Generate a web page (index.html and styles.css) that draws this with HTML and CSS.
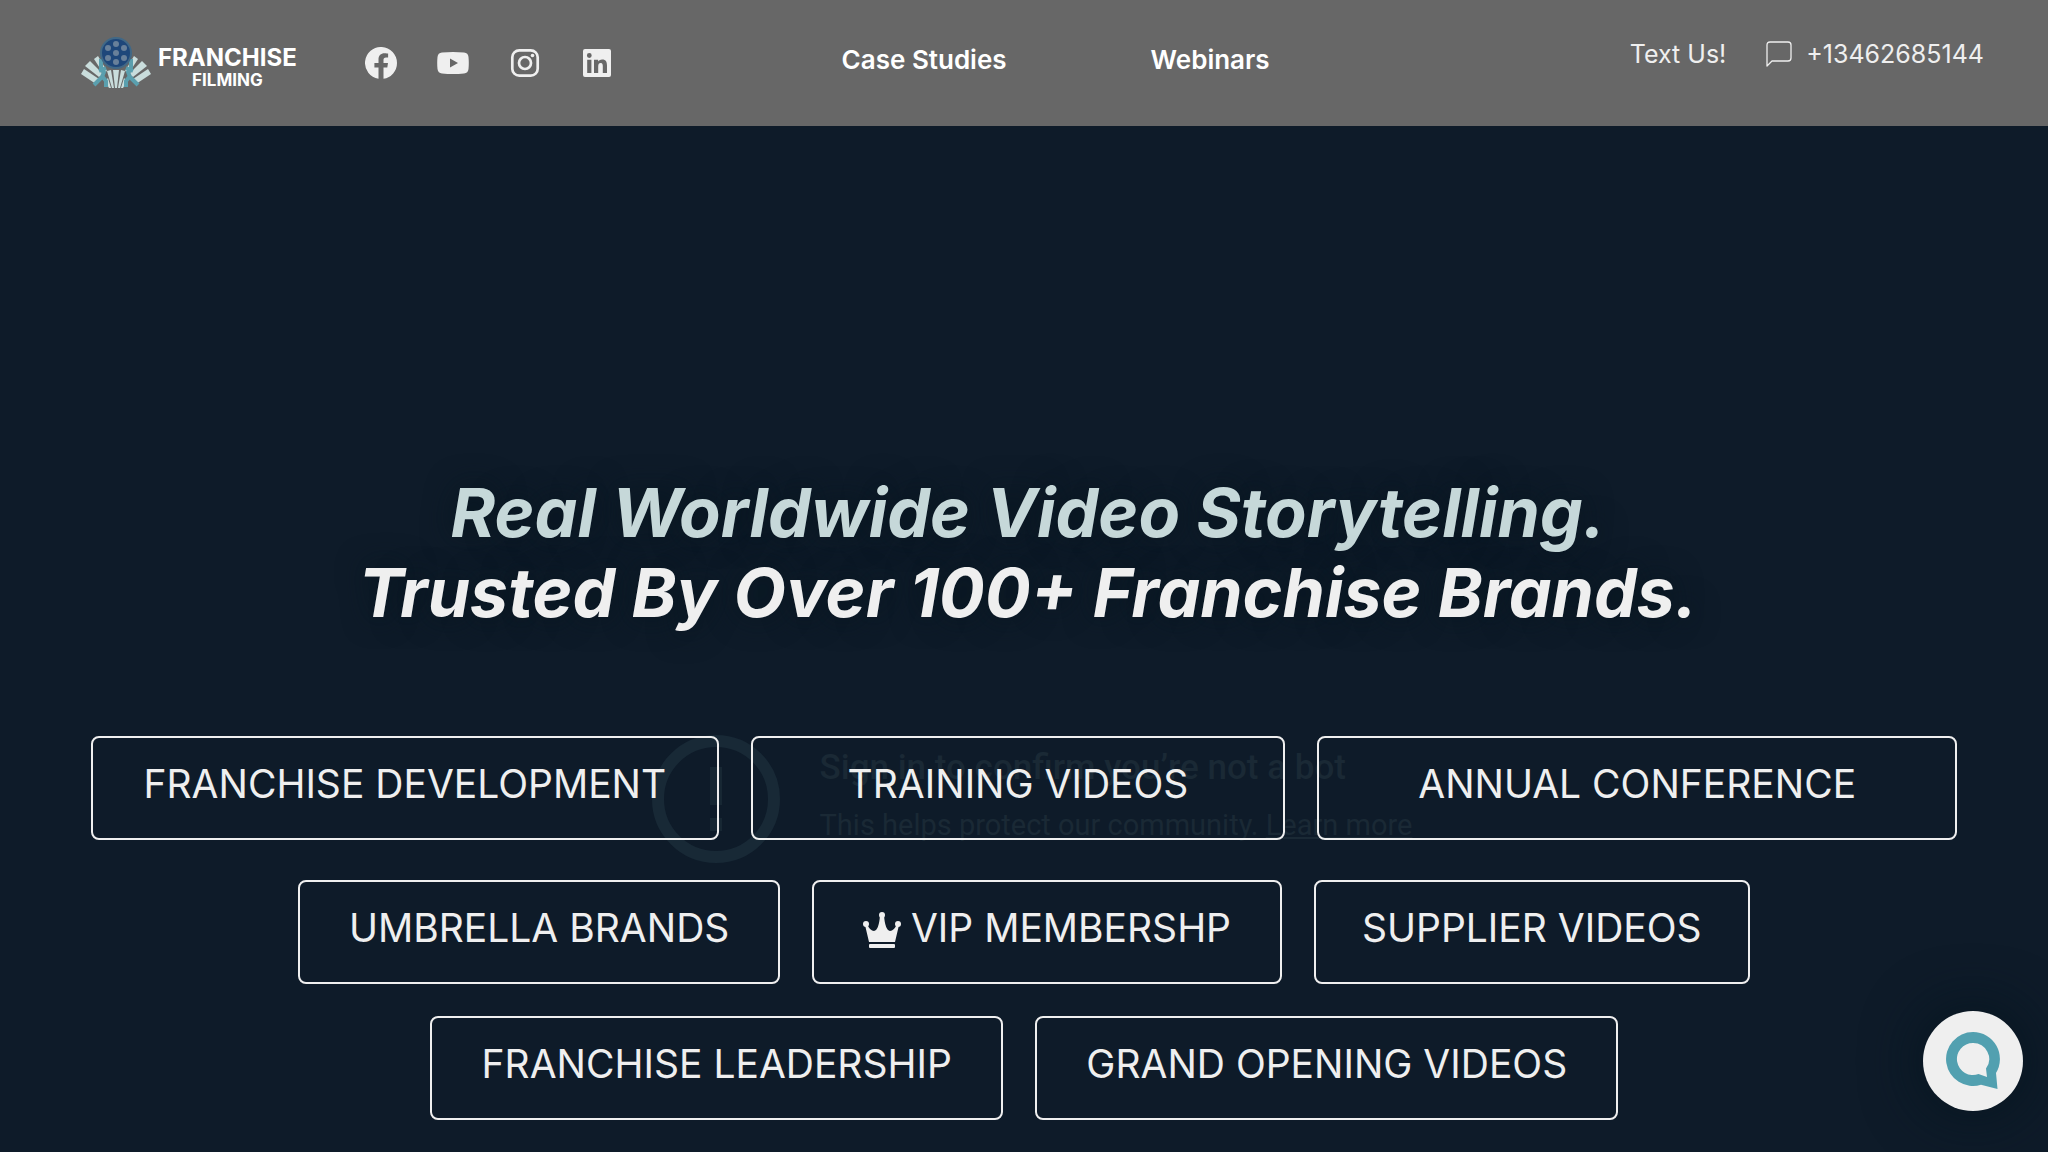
FILE: index.html
```html
<!DOCTYPE html>
<html lang="en">
<head>
    <meta charset="UTF-8">
    <meta name="viewport" content="width=device-width, initial-scale=1.0">
    <title>Franchise Filming</title>
    <link rel="stylesheet" href="styles.css">
</head>
<body>

    <header class="header">
        <div class="brand">
            <a class="logo" href="#">
                <svg class="logo-mark" viewBox="0 0 72 52" aria-hidden="true">
                    <!-- Light rays -->
                    <g fill="#c9dddc">
                        <path d="M1 37 4 32 19 42 16 47z" />
                        <path d="M5 29 10 24 23 37 19 40z" />
                        <path d="M14 22 18 19 27 34 23 36z" />
                        <path d="M71 37 68 32 53 42 56 47z" />
                        <path d="M67 29 62 24 49 37 53 40z" />
                        <path d="M58 22 54 19 45 34 49 36z" />
                        <path d="M27 34l4-1 3 18h-2zM33 33h6l-2 18h-2zM45 34l-4-1-3 18h2zM25 44l3-3 3 10h-2zM47 44l-3-3-3 10h2z" />
                    </g>
                    <!-- Camera crew -->
                    <g fill="none" stroke="#5a9fae" stroke-width="4" stroke-linejoin="round">
                        <path d="M21 22v9l3 4-2 5-8 8M22 39l4 5v6M19 34l7-3" />
                        <path d="M51 22v9l-3 4 2 5 8 8M50 39l-4 5v6M53 34l-7-3" />
                    </g>
                    <!-- Film reel -->
                    <circle cx="36" cy="16" r="15" fill="#1e477a" stroke="#416886" stroke-width="2" />
                    <g fill="#68809a">
                        <circle cx="36" cy="16" r="3" />
                        <circle cx="36" cy="7" r="3" />
                        <circle cx="36" cy="25" r="3" />
                        <circle cx="28" cy="11" r="3" />
                        <circle cx="44" cy="11" r="3" />
                        <circle cx="28" cy="21" r="3" />
                        <circle cx="44" cy="21" r="3" />
                    </g>
                </svg>
                <span class="logo-text">
                    <span class="logo-name">FRANCHISE</span>
                    <span class="logo-sub">FILMING</span>
                </span>
            </a>
            <div class="social">
                <a href="#" aria-label="Facebook">
                    <svg viewBox="0 0 32 32"><path d="M32 16a16 16 0 1 0-18.500 15.800V20.600H9.400V16h4.100v-3.500c0-4 2.400-6.200 6-6.200 1.800 0 3.600.3 3.600.3v4h-2c-2 0-2.600 1.200-2.600 2.500V16H23l-.7 4.600h-3.800v11.200A16 16 0 0 0 32 16z" /></svg>
                </a>
                <a href="#" aria-label="YouTube">
                    <svg viewBox="0 0 32 32"><path fill-rule="evenodd" d="M5 5.500q11-1 22 0 4.200.4 4.500 4.500.6 6 0 12-.4 4-4.500 4.500-11 1-22 0-4-.5-4.500-4.500-.6-6 0-12 .4-4.100 4.500-4.500zM13 11.500v9l8-4.500z" /></svg>
                </a>
                <a href="#" aria-label="Instagram">
                    <svg viewBox="0 0 32 32">
                        <rect x="3.300" y="3.300" width="25.400" height="25.400" rx="7" fill="none" stroke="#efefef" stroke-width="2.700" />
                        <circle cx="16" cy="16" r="6" fill="none" stroke="#efefef" stroke-width="2.700" />
                        <circle cx="23.500" cy="8.500" r="1.800" />
                    </svg>
                </a>
                <a href="#" aria-label="LinkedIn">
                    <svg viewBox="0 0 32 32"><path fill-rule="evenodd" d="M4 2h24q2 0 2 2v24q0 2-2 2H4q-2 0-2-2V4q0-2 2-2zM6.200 12.700v13.200h4.200V12.700zM8.300 6.100a2.400 2.400 0 1 0 0 4.800 2.400 2.400 0 0 0 0-4.800zM13 12.700v13.200h4.200v-6.500c0-1.800.4-3.500 2.500-3.500s2.100 1.900 2.100 3.600v6.400H26v-7.300c0-3.500-.8-6.200-4.900-6.200-2 0-3.400 1-4 2.100v-1.800z" /></svg>
                </a>
            </div>
        </div>

        <nav class="nav">
            <a href="#">Case Studies</a>
            <a href="#">Webinars</a>
        </nav>

        <div class="contact">
            <span>Text Us!</span>
            <a class="phone" href="sms:+13462685144">
                <svg class="phone-icon" viewBox="0 0 26 26" aria-hidden="true"><path d="M1 25V4q0-3 3-3h18q3 0 3 3v13q0 3-3 3H6z" fill="none" stroke="#efefef" stroke-width="1.300" stroke-linejoin="round" /></svg>
                +13462685144
            </a>
        </div>
    </header>

    <main class="hero">
        <!-- Background video message -->
        <div class="video-message">
            <svg class="video-icon" viewBox="0 0 128 128" aria-hidden="true">
                <circle cx="64" cy="64" r="58" fill="none" stroke="#182936" stroke-width="12" />
                <path d="M58 32h12v38H58zM58 83h12v13H58z" fill="#172733" />
            </svg>
            <div>
                <p class="video-title">Sign in to confirm you’re not a bot</p>
                <p class="video-text">This helps protect our community. <a href="#">Learn more</a></p>
            </div>
        </div>

        <h1 class="title">
            <span class="title-accent">Real Worldwide Video Storytelling.</span>
            <span>Trusted By Over 100+ Franchise Brands.</span>
        </h1>

        <div class="buttons">
            <div class="row row-wide">
                <a class="btn" href="#">FRANCHISE DEVELOPMENT</a>
                <a class="btn" href="#">TRAINING VIDEOS</a>
                <a class="btn" href="#">ANNUAL CONFERENCE</a>
            </div>
            <div class="row row-medium">
                <a class="btn" href="#">UMBRELLA BRANDS</a>
                <a class="btn" href="#">
                    <svg class="crown" viewBox="0 0 38 42" aria-hidden="true">
                        <path d="M6 33 2 16l2-1q3 7 7 7 5-1 6-16h4q1 15 6 16 4 0 7-7l2 1-4 17z" />
                        <circle cx="19" cy="6" r="3" />
                        <circle cx="3" cy="15" r="3" />
                        <circle cx="35" cy="15" r="3" />
                        <rect x="6" y="35" width="26" height="4" rx="1" />
                    </svg>
                    VIP MEMBERSHP
                </a>
                <a class="btn" href="#">SUPPLIER VIDEOS</a>
            </div>
            <div class="row row-narrow">
                <a class="btn" href="#">FRANCHISE LEADERSHIP</a>
                <a class="btn" href="#">GRAND OPENING VIDEOS</a>
            </div>
        </div>
    </main>

    <button class="chat" type="button" aria-label="Open chat">
        <svg viewBox="0 0 54 58" aria-hidden="true">
            <path fill-rule="evenodd" fill="#52a0b0" d="M27 0a27 27 0 1 0 8 52.800L51.500 57 50 41A27 27 0 0 0 27 0zM27 11a16 16 0 1 0 5.500 31L41 45l-1-8.500A16 16 0 0 0 27 11z" />
        </svg>
    </button>

</body>
</html>
```
FILE: styles.css
```css
* {
    box-sizing: border-box;
}
body {
    margin: 0;
    min-height: 100vh;
    font-family: Inter, "Liberation Sans", sans-serif;
    background-color: #0e1b29;
    color: #efefef;
}
a {
    color: inherit;
    text-decoration: none;
}

/* Header */
.header {
    display: grid;
    grid-template-columns: 40% 1fr auto;
    align-items: center;
    height: 126px;
    padding: 0 64px 0 80px;
    background-color: #676767;
}
.brand {
    display: flex;
    align-items: center;
    gap: 68px;
}
.logo {
    display: flex;
    align-items: center;
    gap: 6px;
    color: #fff;
    font-weight: 700;
}
.logo-mark {
    width: 72px;
    height: 52px;
}
.logo-text {
    display: flex;
    flex-direction: column;
    align-items: center;
    padding-top: 10px;
}
.logo-name {
    font-size: 24px;
    line-height: 24px;
}
.logo-sub {
    font-size: 17px;
    line-height: 20px;
}
.social {
    display: flex;
    gap: 40px;
}
.social svg {
    display: block;
    width: 32px;
    height: 32px;
    fill: #efefef;
}
.nav {
    display: flex;
    gap: 144px;
    padding-bottom: 8px;
    color: #fff;
    font-size: 26px;
    font-weight: 600;
}
.contact {
    display: flex;
    gap: 40px;
    padding-bottom: 18px;
    font-size: 25px;
}
.phone {
    display: flex;
    align-items: center;
    gap: 14px;
}
.phone-icon {
    width: 26px;
    height: 26px;
}

/* Hero */
.hero {
    position: relative;
    padding: 346px 91px 32px;
}
.title {
    display: flex;
    flex-direction: column;
    align-items: center;
    margin: 0;
    padding-left: 8px;
    font-size: 68px;
    font-style: italic;
    font-weight: 700;
    line-height: 80px;
    text-shadow: 0 0 30px #08161f;
}
.title-accent {
    color: #c6d8d9;
}
.video-message {
    position: absolute;
    top: 609px;
    left: 0;
    right: 0;
    display: flex;
    justify-content: center;
    gap: 40px;
    padding-left: 16px;
    font-family: Roboto, sans-serif;
    color: #1a2935;
}
.video-icon {
    width: 128px;
    height: 128px;
}
.video-message p {
    margin: 0;
}
.video-title {
    padding-top: 12px;
    font-size: 35px;
    font-weight: 500;
    line-height: 42px;
}
.video-text {
    padding-top: 18px;
    font-size: 29px;
    line-height: 36px;
}
.video-text a {
    text-decoration: underline;
}

/* Service buttons */
.buttons {
    position: relative;
    display: flex;
    flex-direction: column;
    align-items: center;
    gap: 32px;
    padding-top: 104px;
}
.row {
    display: grid;
    gap: 32px;
    width: 100%;
}
.row-wide {
    grid-template-columns: 628fr 535fr 640fr;
    margin-bottom: 8px;
}
.row-medium {
    max-width: 1452px;
    grid-template-columns: 483fr 470fr 437fr;
}
.row-narrow {
    max-width: 1188px;
    grid-template-columns: 573fr 582fr;
}
.btn {
    display: flex;
    align-items: center;
    justify-content: center;
    gap: 10px;
    height: 104px;
    padding-bottom: 10px;
    border: 2px solid #efefef;
    border-radius: 8px;
    font-size: 39px;
    white-space: nowrap;
}
.crown {
    width: 38px;
    height: 42px;
    margin-top: 6px;
    fill: #efefef;
}

/* Chat button */
.chat {
    position: fixed;
    right: 25px;
    bottom: 41px;
    display: flex;
    align-items: center;
    justify-content: center;
    width: 100px;
    height: 100px;
    padding: 0;
    border: 0;
    border-radius: 50%;
    background-color: #efefef;
    box-shadow: 0 0 60px #06151f;
    cursor: pointer;
}
.chat svg {
    width: 54px;
    height: 58px;
}
```
